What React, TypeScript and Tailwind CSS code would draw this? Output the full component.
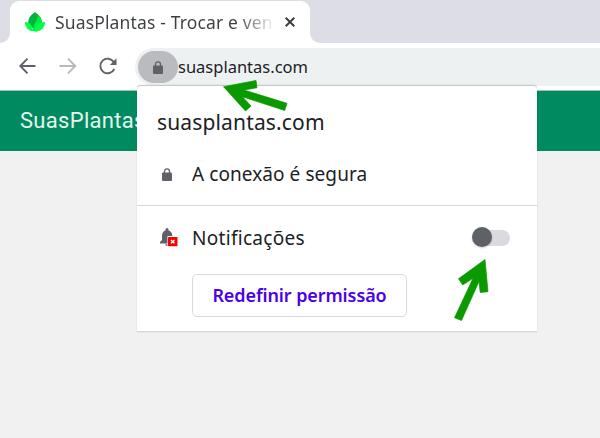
import React from "react";

function Lock({ className }: { className: string }) {
  return (
    <svg viewBox="0 0 10 13" className={className} fill="none">
      <path d="M2.500 5V3.300a2.500 2.500 0 0 1 5 0V5" stroke="#5f6169" strokeWidth="1.300" />
      <rect y="4.400" width="10" height="8.600" rx="1" fill="#5f6169" />
    </svg>
  );
}

function Leaf() {
  return (
    <svg width="20" height="20" viewBox="0 0 20 20" className="shrink-0">
      <path d="M10 0C6 3 3 6 3.300 10.500L9 18l7.700-8C16.800 6 14 3 10 0Z" fill="#00b43d" />
      <path d="M13 3C13.500 8 7 12 8 19l4 .5 5-8C17 8 16 5 13 3Z" fill="#00ea45" />
      <path d="M10 19.500C9.500 14 13 10 20 10c0 5-3 9.500-10 9.500Z" fill="#00ff48" />
      <path d="M0 10c3.500-.2 6.500 2 8.300 9.300C3 19 0 15 0 10Z" fill="#00ff48" />
    </svg>
  );
}

function TabStrip() {
  return (
    <div className="flex h-[43px] items-end bg-[#dddde6]">
      <svg width="10" height="10" className="shrink-0"><path d="M0 10A10 10 0 0 0 10 0V10Z" fill="#fff" /></svg>
      <div className="flex h-[42px] w-[300px] shrink-0 items-center rounded-t-[9px] bg-white pl-[15px]">
        <Leaf />
        <div className="ml-[10px] w-[220px] overflow-hidden bg-linear-to-r from-[#3c4043] from-82% to-white to-100% bg-clip-text text-[17.500px] leading-6 tracking-[0.15px] whitespace-nowrap text-transparent">
          SuasPlantas - Trocar e ven
        </div>
        <svg width="10" height="10" viewBox="0 0 10 10" className="ml-[10px]"><path d="M.7.700 9.300 9.300M9.300.700.700 9.300" stroke="#3c4043" strokeWidth="2" /></svg>
      </div>
      <svg width="10" height="10" className="shrink-0"><path d="M0 0A10 10 0 0 0 10 10H0Z" fill="#fff" /></svg>
    </div>
  );
}

function Toolbar() {
  return (
    <div className="flex h-[47px] bg-white pt-[5px] pl-[19px]">
      <svg width="98" height="36" fill="none" strokeWidth="1.900" className="shrink-0">
        <path d="M16.500 18H2M8.500 10.700 1.300 18l7.200 7.300" stroke="#5f6169" />
        <path d="M40.500 18H56M49 10.700 56.300 18 49 25.300" stroke="#b9b9bd" />
        <path d="M94.800 14A7.300 7.300 0 1 0 95.300 21" stroke="#5f6169" />
        <path d="M97.500 10.300V17H90.800Z" fill="#5f6169" />
      </svg>
      <div className="ml-[18px] flex h-[38px] flex-1 items-start rounded-l-full bg-[#edf1f2] pl-[3px]">
        <div className="mt-[3px] flex h-[32px] w-10 shrink-0 items-center justify-center rounded-full bg-[#babbbf]">
          <Lock className="h-[13px] w-[10px]" />
        </div>
        <span className="mt-[7px] text-[16.500px] leading-6 text-[#202124]">suasplantas.com</span>
      </div>
    </div>
  );
}

function SitePopup() {
  return (
    <div className="absolute top-[85px] left-[137px] h-[247px] w-[400px] rounded-t-[4px] border-t border-b border-t-[#c5c7c9] border-b-[#d5d5dc] bg-white text-[#202124] shadow-[0_0_2px_rgba(0,0,0,0.12)]">
      <div className="h-[120px] border-b border-[#d8d8dc] pt-[21px]">
        <div className="pl-5 text-[21px] leading-[30px] tracking-[0.150px] whitespace-nowrap">suasplantas.com</div>
        <div className="mt-[23px] flex h-[28px] items-center pl-[25px]">
          <Lock className="h-[13px] w-[10px]" />
          <span className="ml-5 text-[19px] leading-7 tracking-[0.070px]">A conexão é segura</span>
        </div>
      </div>
      <div className="flex h-[64px] items-center pl-[23px]">
        <svg width="19" height="20" viewBox="0 0 19 20" className="shrink-0">
          <path d="M0 15.500V14l2-2V7.500C2 4.800 3.600 3 5.500 2.500V1.500a1.500 1.500 0 0 1 3 0v1C10.600 3 12.300 4.800 12.300 7.500v8ZM5.300 16.300h3.400a1.700 1.700 0 0 1-3.400 0Z" fill="#5f6169" />
          <rect x="7.500" y="8" width="11.500" height="11" fill="#fff" />
          <rect x="8" y="9" width="9.500" height="9.300" rx=".7" fill="#f70000" />
          <path d="m11 11.900 3.500 3.400m0-3.400L11 15.300" stroke="#fff" strokeWidth="1.400" />
        </svg>
        <span className="ml-[13px] text-[19px] leading-7 tracking-[0.300px]">Notificações</span>
        <div className="mr-[27px] ml-auto flex h-4 w-[37px] items-center rounded-full bg-[#dadae0]">
          <div className="-ml-px h-5 w-5 shrink-0 -translate-y-px rounded-full bg-[#5f6169] shadow-[0_1px_2px_rgba(0,0,0,0.2)]" />
        </div>
      </div>
      <button className="mt-[4px] ml-[55px] flex h-[43px] w-[215px] items-center justify-center rounded-[5px] border border-[#d9dadd] text-[18px] font-semibold tracking-[-0.1px] whitespace-nowrap text-[#4b00e8]">
        Redefinir permissão
      </button>
    </div>
  );
}

export default function App() {
  return (
    <main className="relative h-[438px] w-[600px] overflow-hidden bg-[#f1f1f1] font-['Noto_Sans',sans-serif]">
      <TabStrip />
      <Toolbar />
      <header className="h-[61px] border-t border-[#a8bdb6] bg-[#008a60] pt-[15px] pl-5 font-[Roboto,sans-serif] text-[22px] leading-[30px] tracking-[0.3px] text-[#e5f5ef]">
        SuasPlantas
      </header>
      <SitePopup />
      <svg className="absolute inset-0" width="600" height="438" fill="#0b9900" stroke="#0b9900" strokeWidth=".7">
        <path d="M223.500 86.700 256 80.500 257 87.700 244 90 287 103.300 284.700 110.500 242.500 96.800 251 106 245.500 111Z" />
        <path d="M485 259.500 488 291.700 480.200 292.500 479 281.500 461.500 320.500 454.500 317.700 473 278.300 462.700 285 458.500 278.700Z" />
      </svg>
    </main>
  );
}
